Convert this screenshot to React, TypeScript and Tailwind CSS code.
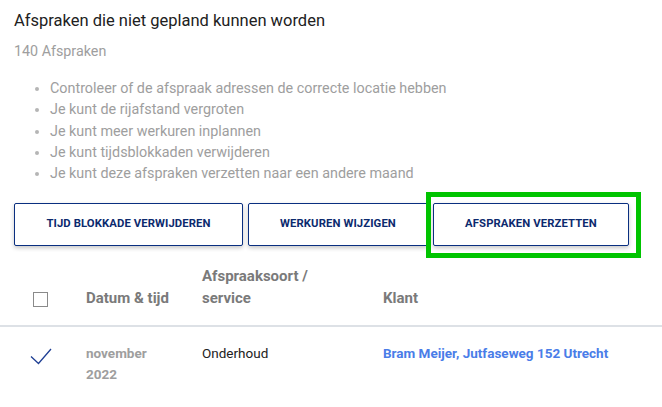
import React from "react";

const items = [
  "Controleer of de afspraak adressen de correcte locatie hebben",
  "Je kunt de rijafstand vergroten",
  "Je kunt meer werkuren inplannen",
  "Je kunt tijdsblokkaden verwijderen",
  "Je kunt deze afspraken verzetten naar een andere maand",
];

function Btn({ children, highlight, w }: { children: React.ReactNode; highlight?: boolean; w: string }) {
  return (
    <div className="relative">
      {highlight && (
        <div className="absolute left-[-7px] top-[-11px] right-[-12px] bottom-[-12px] border-[5px] border-[#00c400] pointer-events-none" />
      )}
      <button
        className={`${w} h-[43px] bg-white border border-[#0a2f80] rounded-[2px] shadow-[0_2px_4px_rgba(0,0,0,0.22)] text-[11.3px] font-bold tracking-[0.1px] text-[#0c2a6e] uppercase whitespace-nowrap`}
      >
        {children}
      </button>
    </div>
  );
}

export default function App() {
  return (
    <div
      className="w-[662px] h-[407px] bg-white overflow-hidden"
      style={{ fontFamily: "Roboto, 'Noto Sans', sans-serif" }}
    >
      <div className="pl-[14px] pt-[10px]">
        <h1 className="text-[16.5px] leading-[22px] text-[#212121] font-normal">
          Afspraken die niet gepland kunnen worden
        </h1>
        <p className="mt-[9px] text-[14.3px] leading-[20px] text-[#9e9e9e]">140 Afspraken</p>
        <ul className="mt-[17px] pl-[36px] list-disc text-[14.35px] leading-[21.25px] text-[#9e9e9e] marker:text-[#b5b5b5]">
          {items.map((t) => (
            <li key={t}>{t}</li>
          ))}
        </ul>
        <div className="mt-[19px] flex gap-[5px]">
          <Btn w="w-[229px]">Tijd blokkade verwijderen</Btn>
          <Btn w="w-[180px]">Werkuren wijzigen</Btn>
          <Btn w="w-[196px]" highlight>
            Afspraken verzetten
          </Btn>
        </div>
      </div>

      <div className="mt-[19px] border-b-2 border-[#dde1e6] pb-[16px] pl-[33px] grid grid-cols-[53px_116px_181px_1fr] items-end text-[15px] leading-[22px] font-bold text-[#7a7a7a]">
        <div className="mb-[2px] w-[15px] h-[15px] border-[1.5px] border-[#8a8a8a]" />
        <div>Datum &amp; tijd</div>
        <div>
          Afspraaksoort /
          <br />
          service
        </div>
        <div>Klant</div>
      </div>

      <div className="pt-[16px] pl-[33px] grid grid-cols-[53px_116px_181px_1fr] items-start text-[13.5px] leading-[21px]">
        <div className="pt-[4px] -ml-[3px]">
          <svg width="24" height="18" viewBox="0 0 24 18" fill="none">
            <path d="M1 9.5 L8.5 16.5 L21 2" stroke="#1f3f94" strokeWidth="1.3" />
          </svg>
        </div>
        <div className="font-bold text-[#9e9e9e]">
          november
          <br />
          2022
        </div>
        <div className="text-[#212121]">Onderhoud</div>
        <div className="font-bold text-[#4a7de8]">Bram Meijer, Jutfaseweg 152 Utrecht</div>
      </div>
    </div>
  );
}
